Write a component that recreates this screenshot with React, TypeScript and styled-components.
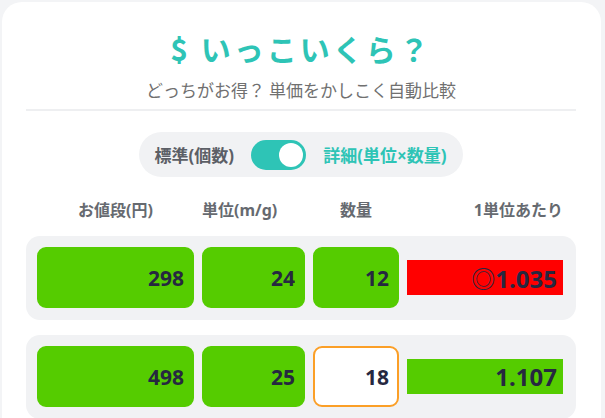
import React, { useState } from 'react'
import styled, { createGlobalStyle } from 'styled-components'

const GlobalStyle = createGlobalStyle`
  html, body {
    margin: 0;
    padding: 0;
    background: #f3f4f6;
    font-family: "Noto Sans", "Noto Sans CJK JP", sans-serif;
  }
  * { box-sizing: border-box; }
`

const Page = styled.div`
  padding: 2px 4px 0 2px;
  height: 418px;
  overflow: hidden;
`

const Card = styled.div`
  background: #fff;
  border-radius: 20px 20px 0 0;
  padding: 28px 25px 40px 24px;
  min-height: 500px;
  display: flex;
  flex-direction: column;
  align-items: stretch;
`

const Title = styled.h1`
  margin: 0;
  text-align: center;
  color: #2ec4b6;
  font-size: 30px;
  line-height: 36px;
  font-weight: 700;
  letter-spacing: 3px;
  font-family: "Noto Sans CJK JP", sans-serif;
`

const Subtitle = styled.p`
  margin: 12px 0 0;
  text-align: center;
  color: #707070;
  font-size: 17px;
  line-height: 24px;
  font-family: "Noto Sans CJK JP", sans-serif;
`

const Divider = styled.hr`
  margin: 7px 0 0;
  border: none;
  height: 2px;
  background: #eeeff1;
`

const ModeBar = styled.div`
  align-self: center;
  margin-top: 21px;
  height: 45px;
  padding: 0 17px 0 16px;
  display: flex;
  align-items: center;
  gap: 17px;
  background: #f1f2f4;
  border-radius: 23px;
`

const ModeLabel = styled.span<{ $on?: boolean }>`
  font-size: 17px;
  font-weight: 700;
  color: ${p => (p.$on ? '#2ec4b6' : '#5c5f66')};
`

const Switch = styled.button<{ $on: boolean }>`
  width: 55px;
  height: 30px;
  border: none;
  padding: 3px;
  border-radius: 15px;
  background: ${p => (p.$on ? '#2ec4b6' : '#c9ccd1')};
  display: flex;
  justify-content: ${p => (p.$on ? 'flex-end' : 'flex-start')};
  cursor: pointer;
`

const Knob = styled.span`
  width: 24px;
  height: 24px;
  border-radius: 50%;
  background: #fff;
`

const HeadRow = styled.div`
  margin-top: 22px;
  padding: 0 13px 0 11px;
  display: grid;
  grid-template-columns: 157px 68px 156px 1fr;
  gap: 8px;
`

const HeadCell = styled.div<{ $align?: string }>`
  text-align: ${p => p.$align || 'center'};
  font-size: 16px;
  line-height: 22px;
  font-weight: 700;
  color: #666a70;
  white-space: nowrap;
`

const Rows = styled.div`
  margin-top: 15px;
  display: flex;
  flex-direction: column;
  gap: 15px;
`

const ItemRow = styled.div`
  background: #f1f2f4;
  border-radius: 14px;
  padding: 11px 13px 12px 11px;
  display: grid;
  grid-template-columns: 157px 103px 86px 1fr;
  gap: 8px;
  align-items: center;
`

const Field = styled.input<{ $active?: boolean }>`
  width: 100%;
  height: 61px;
  border-radius: 9px;
  border: 2px solid ${p => (p.$active ? '#fb9f27' : '#55cc00')};
  background: ${p => (p.$active ? '#fff' : '#55cc00')};
  color: #262840;
  font-family: "Noto Sans", sans-serif;
  font-size: 21px;
  font-weight: 700;
  text-align: right;
  padding: 0 8px;
  outline: none;
`

const Result = styled.div<{ $best?: boolean }>`
  height: 35px;
  background: ${p => (p.$best ? '#ff0000' : '#55cc00')};
  color: #262840;
  font-size: 24px;
  font-weight: 700;
  line-height: 35px;
  text-align: right;
  padding-right: 6px;
`

const Mark = styled.span`
  font-weight: 400;
  font-family: "Noto Sans CJK JP", sans-serif;
`

type Item = { price: number; unit: number; qty: number }

const items: Item[] = [
  { price: 298, unit: 24, qty: 12 },
  { price: 498, unit: 25, qty: 18 },
]

const per = (i: Item) => i.price / (i.unit * i.qty)

export default function App() {
  const [detail, setDetail] = useState(true)
  const best = Math.min(...items.map(per))

  return (
    <Page>
      <GlobalStyle />
      <Card>
        <Title>$ いっこいくら？</Title>
        <Subtitle>どっちがお得？ 単価をかしこく自動比較</Subtitle>
        <Divider />
        <ModeBar>
          <ModeLabel>標準(個数)</ModeLabel>
          <Switch $on={detail} onClick={() => setDetail(!detail)} aria-label="mode">
            <Knob />
          </Switch>
          <ModeLabel $on>詳細(単位×数量)</ModeLabel>
        </ModeBar>
        <HeadRow>
          <HeadCell>お値段(円)</HeadCell>
          <HeadCell>単位(m/g)</HeadCell>
          <HeadCell>数量</HeadCell>
          <HeadCell $align="right">1単位あたり</HeadCell>
        </HeadRow>
        <Rows>
          {items.map((item, idx) => {
            const v = per(item)
            const isBest = v === best
            return (
              <ItemRow key={idx}>
                <Field defaultValue={item.price} />
                <Field defaultValue={item.unit} />
                <Field defaultValue={item.qty} $active={idx === 1} />
                <Result $best={isBest}>
                  {isBest && <Mark>◎</Mark>}
                  {v.toFixed(3)}
                </Result>
              </ItemRow>
            )
          })}
        </Rows>
      </Card>
    </Page>
  )
}
